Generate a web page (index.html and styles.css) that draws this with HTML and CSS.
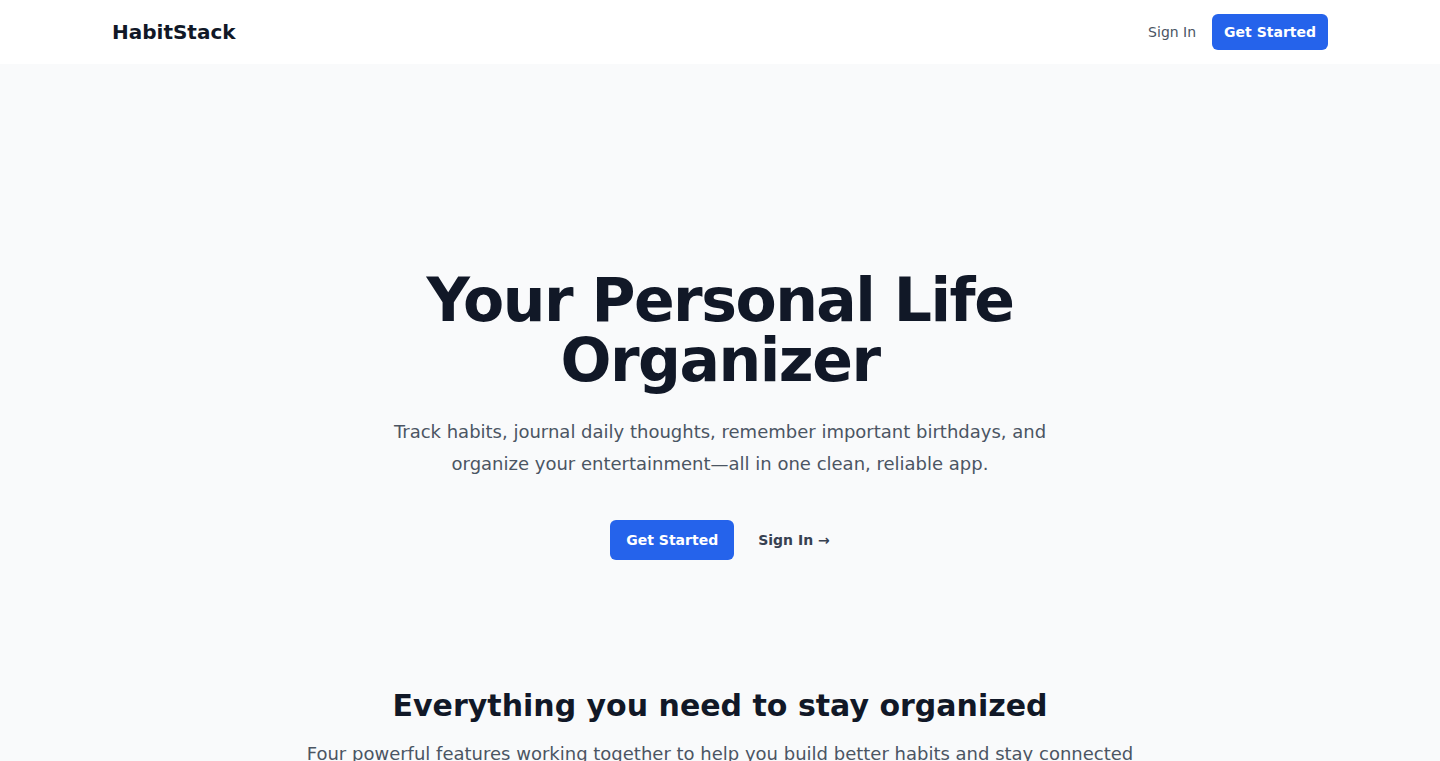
FILE: index.html
```html
<!DOCTYPE html>
<html lang="en">
<head>
<meta charset="utf-8">
<title>HabitStack</title>
<link rel="stylesheet" href="styles.css">
</head>
<body>
<header class="site-header">
  <div class="container header-inner">
    <a class="logo" href="#">HabitStack</a>
    <nav class="header-nav">
      <a class="nav-link" href="#">Sign In</a>
      <a class="btn btn-sm" href="#">Get Started</a>
    </nav>
  </div>
</header>
<main>
  <section class="hero">
    <div class="hero-inner">
      <h1 class="hero-title">Your Personal Life Organizer</h1>
      <p class="hero-text">Track habits, journal daily thoughts, remember important birthdays, and organize your entertainment—all in one clean, reliable app.</p>
      <div class="hero-actions">
        <a class="btn btn-lg" href="#">Get Started</a>
        <a class="link-arrow" href="#">Sign In <span aria-hidden="true">→</span></a>
      </div>
    </div>
  </section>
  <section class="features">
    <div class="container features-head">
      <h2 class="features-title">Everything you need to stay organized</h2>
      <p class="features-text">Four powerful features working together to help you build better habits and stay connected</p>
    </div>
  </section>
</main>
</body>
</html>
```
FILE: styles.css
```css
* { box-sizing: border-box; }
html, body { margin: 0; padding: 0; }
body {
  font-family: "DejaVu Sans", sans-serif;
  background: #f9fafb;
  color: #111827;
  -webkit-font-smoothing: antialiased;
}
a { text-decoration: none; color: inherit; }
.container {
  max-width: 1280px;
  margin: 0 auto;
  padding: 0 32px;
}
.site-header {
  background: #ffffff;
}
.header-inner {
  height: 64px;
  display: flex;
  align-items: center;
  justify-content: space-between;
}
.logo {
  font-size: 20px;
  line-height: 28px;
  font-weight: 700;
  color: #111827;
}
.header-nav {
  display: flex;
  align-items: center;
  gap: 16px;
}
.nav-link {
  font-size: 14px;
  line-height: 20px;
  color: #4b5563;
}
.btn {
  display: inline-block;
  background: #2563eb;
  color: #ffffff;
  font-weight: 700;
  font-size: 14px;
  line-height: 20px;
  border-radius: 6px;
}
.btn-sm { padding: 8px 12px; }
.btn-lg { padding: 10px 16px; }
.hero {
  padding: 206px 24px 64px;
}
.hero-inner {
  max-width: 896px;
  margin: 0 auto;
  text-align: center;
}
.hero-title {
  margin: 0 auto;
  max-width: 768px;
  font-size: 60px;
  line-height: 60px;
  font-weight: 700;
  letter-spacing: -0.025em;
  color: #111827;
}
.hero-text {
  margin: 26px auto 0;
  max-width: 672px;
  font-size: 18px;
  line-height: 32px;
  color: #4b5563;
}
.hero-actions {
  margin-top: 40px;
  display: flex;
  justify-content: center;
  align-items: center;
  gap: 24px;
}
.link-arrow {
  font-size: 14px;
  line-height: 20px;
  font-weight: 700;
  color: #374151;
}
.features {
  padding-top: 64px;
}
.features-head { text-align: center; }
.features-title {
  margin: 0;
  font-size: 30px;
  line-height: 36px;
  font-weight: 700;
  color: #111827;
}
.features-text {
  margin: 16px auto 0;
  font-size: 18px;
  line-height: 28px;
  color: #4b5563;
}
```
